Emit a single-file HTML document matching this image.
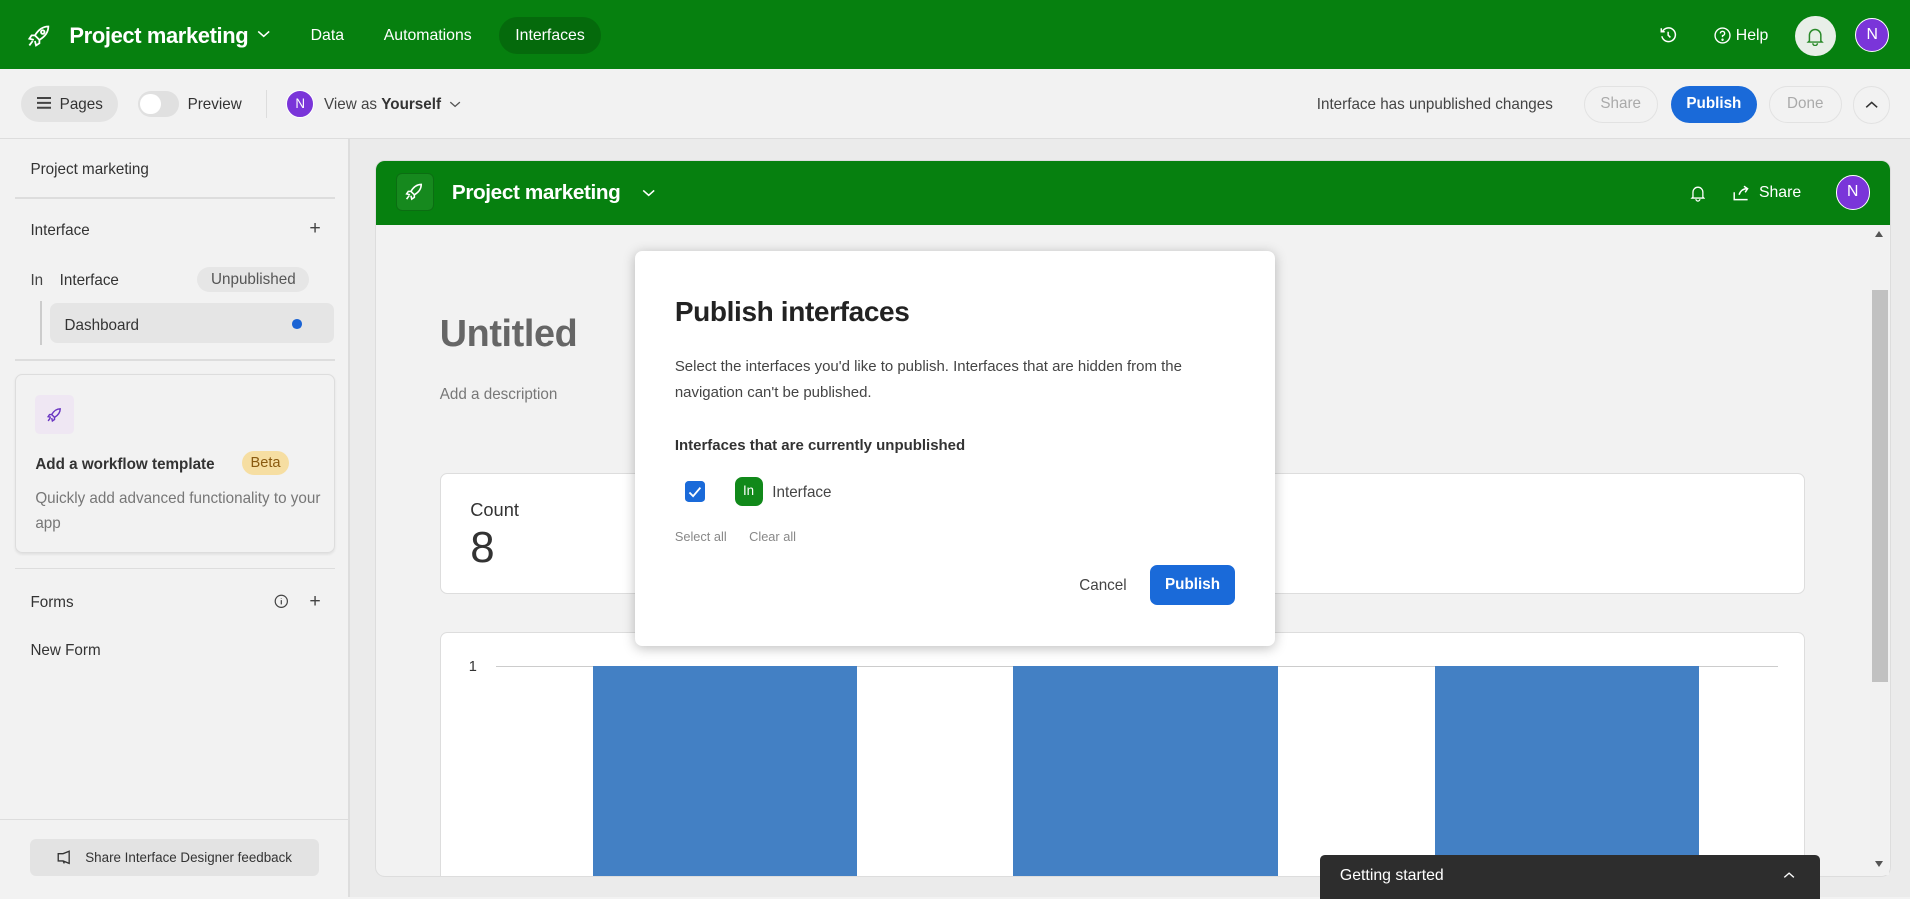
<!DOCTYPE html>
<html><head><meta charset="utf-8"><style>
html{zoom:1.21811}
*{box-sizing:border-box;margin:0;padding:0}
body{width:1568px;height:736px;overflow:hidden;position:relative;background:#f2f2f2;font-family:"Liberation Sans",sans-serif;color:#333;font-size:12.5px}
.a{position:absolute}
.w{color:#fff}
.av{border-radius:50%;background:#7a35d9;color:#fff;text-align:center;font-size:12px;border:1px solid #fff}
.btn{border-radius:16px;text-align:center;font-size:12.5px}
</style></head><body>
<!-- top bar -->
<div class="a" style="left:0;top:0;width:1568px;height:57px;background:#06800f"></div>
<svg class="a" style="left:21px;top:18px" width="22" height="22" viewBox="0 0 24 24" fill="none" stroke="#fff" stroke-width="1.6"><path d="M20 4c-5 0-9 3-12 8l4 4c5-3 8-7 8-12z"/><circle cx="15" cy="9" r="1.6"/><path d="M8 12l-3 0-2 3 4 1M12 16v3l-3 2-1-4M6 17l-3 4"/></svg>
<div class="a w" style="left:57px;top:19px;font-size:18px;font-weight:bold;letter-spacing:-0.3px">Project marketing</div>
<svg class="a" style="left:211px;top:24px" width="11" height="8" viewBox="0 0 11 8" fill="none" stroke="#fff" stroke-width="1.3"><path d="M1 2l4.5 4 4.5-4"/></svg>
<div class="a w" style="left:255px;top:22px;font-size:13px">Data</div>
<div class="a w" style="left:315px;top:22px;font-size:13px">Automations</div>
<div class="a" style="left:410px;top:14px;width:83px;height:30px;border-radius:15px;background:#056a0c"></div>
<div class="a w" style="left:423px;top:22px;font-size:13px">Interfaces</div>
<svg class="a" style="left:1362px;top:21px" width="15" height="15" viewBox="0 0 16 16" fill="none" stroke="#fff" stroke-width="1.3"><path d="M3 5a6 6 0 1 1-.5 4M2 2v3h3M8 5v3l2 2"/></svg>
<svg class="a" style="left:1407px;top:22px" width="14" height="14" viewBox="0 0 16 16" fill="none" stroke="#fff" stroke-width="1.3"><circle cx="8" cy="8" r="7"/><path d="M6 6a2 2 0 1 1 2 2v1.5"/><circle cx="8" cy="12" r=".5"/></svg>
<div class="a w" style="left:1425px;top:22px;font-size:13px">Help</div>
<div class="a" style="left:1474px;top:13px;width:33px;height:33px;border-radius:50%;background:#e8efe8"></div>
<svg class="a" style="left:1483px;top:21px" width="15" height="17" viewBox="0 0 16 18" fill="none" stroke="#2a8a2a" stroke-width="1.3"><path d="M3 13V8a5 5 0 0 1 10 0v5l1 1H2zM6 15a2 2 0 0 0 4 0"/></svg>
<div class="a av" style="left:1523px;top:15px;width:28px;height:28px;line-height:26px;font-size:13px">N</div>
<!-- toolbar -->
<div class="a" style="left:0;top:113px;width:1568px;height:1px;background:#ddd"></div>
<div class="a" style="left:17px;top:71px;width:80px;height:29px;border-radius:15px;background:#e3e3e3"></div>
<div class="a" style="left:30px;top:80px;width:12px;height:1.3px;background:#444;box-shadow:0 4px #444,0 8px #444"></div>
<div class="a" style="left:49px;top:79px">Pages</div>
<div class="a" style="left:113px;top:75px;width:34px;height:21px;border-radius:11px;background:#e0e0e0"></div>
<div class="a" style="left:115px;top:77px;width:17px;height:17px;border-radius:50%;background:#fff"></div>
<div class="a" style="left:154px;top:79px">Preview</div>
<div class="a" style="left:218px;top:74px;width:1px;height:23px;background:#ddd"></div>
<div class="a av" style="left:235px;top:74px;width:23px;height:23px;line-height:21px;font-size:11px">N</div>
<div class="a" style="left:266px;top:79px;color:#444">View as <b style="color:#333">Yourself</b></div>
<svg class="a" style="left:369px;top:82px" width="10" height="7" viewBox="0 0 11 8" fill="none" stroke="#555" stroke-width="1.2"><path d="M1 2l4.5 4 4.5-4"/></svg>
<div class="a" style="left:1081px;top:79px;color:#444">Interface has unpublished changes</div>
<div class="a btn" style="left:1300px;top:71px;width:61px;height:30px;line-height:28px;border:1px solid #e2e2e2;color:#aaa">Share</div>
<div class="a btn" style="left:1372px;top:71px;width:70px;height:30px;line-height:30px;background:#1a6ad9;color:#fff;font-weight:bold">Publish</div>
<div class="a btn" style="left:1452px;top:71px;width:60px;height:30px;line-height:28px;border:1px solid #e2e2e2;color:#aaa">Done</div>
<div class="a btn" style="left:1521px;top:71px;width:31px;height:31px;border:1px solid #e2e2e2"></div>
<svg class="a" style="left:1531px;top:82px" width="11" height="8" viewBox="0 0 11 8" fill="none" stroke="#333" stroke-width="1.3"><path d="M1 6l4.5-4 4.5 4"/></svg>
<!-- sidebar -->
<div class="a" style="left:286px;top:114px;width:1px;height:622px;background:#ddd"></div>
<div class="a" style="left:25px;top:132px">Project marketing</div>
<div class="a" style="left:12px;top:162px;width:263px;height:1px;background:#ddd"></div>
<div class="a" style="left:25px;top:182px">Interface</div>
<div class="a" style="left:254px;top:178px;font-size:16px;color:#444">+</div>
<div class="a" style="left:25px;top:223px;color:#444">In</div>
<div class="a" style="left:49px;top:223px">Interface</div>
<div class="a" style="left:162px;top:219px;width:92px;height:21px;border-radius:11px;background:#e6e6e6;color:#555;text-align:center;line-height:21px">Unpublished</div>
<div class="a" style="left:33px;top:247px;width:1.5px;height:36px;background:#ccc"></div>
<div class="a" style="left:41px;top:249px;width:233px;height:33px;border-radius:6px;background:#e5e5e5"></div>
<div class="a" style="left:53px;top:260px">Dashboard</div>
<div class="a" style="left:240px;top:262px;width:8px;height:8px;border-radius:50%;background:#1a63d4"></div>
<div class="a" style="left:12px;top:295px;width:263px;height:1px;background:#ddd"></div>
<div class="a" style="left:12px;top:307px;width:263px;height:147px;border:1px solid #ddd;border-radius:6px;box-shadow:0 1px 2px rgba(0,0,0,.08)"></div>
<div class="a" style="left:29px;top:324px;width:32px;height:32px;border-radius:4px;background:#efe7f3"></div>
<svg class="a" style="left:38px;top:333px" width="14" height="14" viewBox="0 0 24 24" fill="none" stroke="#6a35c2" stroke-width="2"><path d="M20 4c-5 0-9 3-12 8l4 4c5-3 8-7 8-12z"/><path d="M8 12H5l-2 3 4 1M12 16v3l-3 2-1-4M6 17l-3 4"/></svg>
<div class="a" style="left:29px;top:374px;font-weight:bold">Add a workflow template</div>
<div class="a" style="left:199px;top:370px;width:38px;height:20px;border-radius:10px;background:#f6dea2;color:#8a5a10;font-size:12px;text-align:center;line-height:20px">Beta</div>
<div class="a" style="left:29px;top:400px;color:#777;line-height:20px;width:240px">Quickly add advanced functionality to your app</div>
<div class="a" style="left:12px;top:466px;width:263px;height:1px;background:#ddd"></div>
<div class="a" style="left:25px;top:488px">Forms</div>
<svg class="a" style="left:225px;top:488px" width="12" height="12" viewBox="0 0 12 12" fill="none" stroke="#444" stroke-width="1"><circle cx="6" cy="6" r="5"/><path d="M6 5v3.5M6 3.3v.4"/></svg>
<div class="a" style="left:254px;top:484px;font-size:16px;color:#444">+</div>
<div class="a" style="left:25px;top:527px">New Form</div>
<div class="a" style="left:0;top:672px;width:286px;height:1px;background:#ddd"></div>
<div class="a" style="left:25px;top:689px;width:237px;height:30px;border-radius:5px;background:#e3e3e3"></div>
<svg class="a" style="left:47px;top:698px" width="14" height="12" viewBox="0 0 14 12" fill="none" stroke="#333" stroke-width="1.1"><path d="M1 3h4l5-2v10l-5-2H1zM5 9l1 2"/></svg>
<div class="a" style="left:70px;top:698px;font-size:11px">Share Interface Designer feedback</div>
<!-- main -->
<div class="a" style="left:287px;top:114px;width:1281px;height:622px;background:#ebebeb"></div>
<div class="a" style="left:308px;top:131px;width:1244px;height:589px;border-radius:8px;background:#f2f2f2;overflow:hidden;border:1px solid #ddd">
 <div class="a" style="left:0;top:0;width:1244px;height:53px;background:#06800f"></div>
 <div class="a" style="left:52px;top:387px;width:1121px;height:230px;background:#fff;border:1px solid #ddd;border-radius:6px"></div>
 <div class="a" style="left:76px;top:409px;font-size:12px">1</div>
 <div class="a" style="left:98px;top:415px;width:1053px;height:1px;background:#ccc"></div>
 <div class="a" style="left:178px;top:415px;width:217px;height:190px;background:#4380c4"></div>
 <div class="a" style="left:523px;top:415px;width:217px;height:190px;background:#4380c4"></div>
 <div class="a" style="left:869px;top:415px;width:217px;height:190px;background:#4380c4"></div>
</div>
<div class="a" style="left:325px;top:142px;width:31px;height:31px;border-radius:5px;background:#16891e;border:1px solid #0b6e12"></div>
<svg class="a" style="left:332px;top:149px" width="17" height="17" viewBox="0 0 24 24" fill="none" stroke="#fff" stroke-width="1.8"><path d="M20 4c-5 0-9 3-12 8l4 4c5-3 8-7 8-12z"/><path d="M8 12H5l-2 3 4 1M12 16v3l-3 2-1-4M6 17l-3 4"/></svg>
<div class="a w" style="left:371px;top:149px;font-size:17px;font-weight:bold;letter-spacing:-0.3px">Project marketing</div>
<svg class="a" style="left:527px;top:154px" width="11" height="8" viewBox="0 0 11 8" fill="none" stroke="#fff" stroke-width="1.3"><path d="M1 2l4.5 4 4.5-4"/></svg>
<svg class="a" style="left:1387px;top:151px" width="13" height="15" viewBox="0 0 16 18" fill="none" stroke="#fff" stroke-width="1.3"><path d="M3 13V8a5 5 0 0 1 10 0v5l1 1H2zM6 15a2 2 0 0 0 4 0"/></svg>
<svg class="a" style="left:1423px;top:152px" width="14" height="13" viewBox="0 0 14 13" fill="none" stroke="#fff" stroke-width="1.2"><path d="M1 6v6h11M5 8c1-3 3-5 7-5M9 1l3 2-2 3"/></svg>
<div class="a w" style="left:1444px;top:151px;font-size:13px">Share</div>
<div class="a av" style="left:1507px;top:144px;width:28px;height:28px;line-height:26px;font-size:13px">N</div>
<!-- scrollbar -->
<div class="a" style="left:1535px;top:185px;width:16px;height:533px;background:#f1f1f1"></div>
<div class="a" style="left:1537px;top:238px;width:13px;height:322px;background:#c1c1c1"></div>
<div class="a" style="left:1539px;top:190px;width:0;height:0;border-left:4px solid transparent;border-right:4px solid transparent;border-bottom:5px solid #555"></div>
<div class="a" style="left:1539px;top:707px;width:0;height:0;border-left:4px solid transparent;border-right:4px solid transparent;border-top:5px solid #555"></div>
<div class="a" style="left:361px;top:257px;font-size:31px;font-weight:bold;color:#666;letter-spacing:-0.3px">Untitled</div>
<div class="a" style="left:361px;top:317px;color:#777">Add a description</div>
<div class="a" style="left:361px;top:388px;width:1121px;height:100px;background:#fff;border:1px solid #ddd;border-radius:6px"></div>
<div class="a" style="left:386px;top:410px;font-size:15px">Count</div>
<div class="a" style="left:386px;top:429px;font-size:36px;color:#333">8</div>
<div class="a" style="left:1084px;top:702px;width:410px;height:36px;background:#2d2d2d;border-radius:4px 4px 0 0"></div>
<div class="a w" style="left:1100px;top:712px;font-size:13px">Getting started</div>
<svg class="a" style="left:1464px;top:715px" width="10" height="7" viewBox="0 0 11 8" fill="none" stroke="#fff" stroke-width="1.3"><path d="M1 6l4.5-4 4.5 4"/></svg>
<!-- modal -->
<div class="a" style="left:521px;top:206px;width:526px;height:324px;background:#fff;border-radius:6px;box-shadow:0 2px 10px rgba(0,0,0,.25)"></div>
<div class="a" style="left:554px;top:243px;font-size:23px;font-weight:bold;color:#222;letter-spacing:-0.3px">Publish interfaces</div>
<div class="a" style="left:554px;top:291px;width:470px;line-height:21px;color:#444;font-size:12.3px">Select the interfaces you'd like to publish. Interfaces that are hidden from the navigation can't be published.</div>
<div class="a" style="left:554px;top:359px;font-weight:bold;color:#333;font-size:12.3px">Interfaces that are currently unpublished</div>
<div class="a" style="left:562px;top:395px;width:17px;height:17px;border-radius:3px;background:#1a6ad9"></div>
<svg class="a" style="left:564px;top:397px" width="13" height="13" viewBox="0 0 13 13" fill="none" stroke="#fff" stroke-width="1.5"><path d="M2 7l3 3 6-7"/></svg>
<div class="a" style="left:603px;top:392px;width:23px;height:23px;border-radius:6px;background:#11891a;color:#fff;font-size:11px;text-align:center;line-height:23px">In</div>
<div class="a" style="left:634px;top:397px;color:#444">Interface</div>
<div class="a" style="left:554px;top:434px;font-size:10.5px;color:#888">Select all</div>
<div class="a" style="left:615px;top:434px;font-size:10.5px;color:#888">Clear all</div>
<div class="a" style="left:886px;top:474px;color:#444">Cancel</div>
<div class="a" style="left:944px;top:464px;width:70px;height:33px;border-radius:6px;background:#1a6ad9;color:#fff;font-weight:bold;text-align:center;line-height:33px">Publish</div>
</body></html>
